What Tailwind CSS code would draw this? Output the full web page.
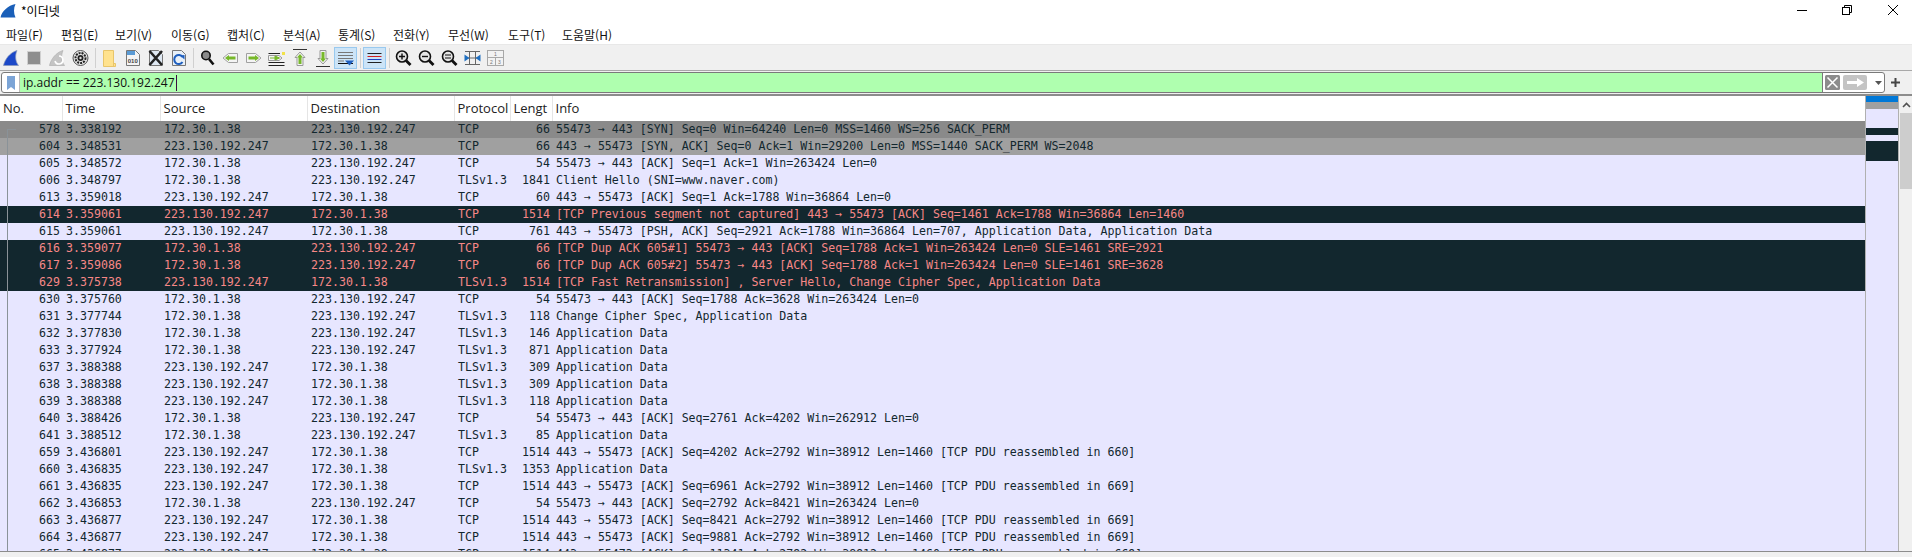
<!DOCTYPE html>
<html lang="ko">
<head>
<meta charset="UTF-8">
<title>*이더넷</title>
<script src="https://cdn.jsdelivr.net/npm/@tailwindcss/browser@4"></script>
</head>
<body class="m-0 bg-[#f0f0f0] font-['Open_Sans','Noto_Sans_CJK_KR',sans-serif] text-[12px] text-black">
<div class="w-[1912px] h-[557px] overflow-hidden flex flex-col">

  <!-- title bar -->
  <div class="h-[26px] bg-white flex items-center relative shrink-0">
    <svg class="ml-0 mt-[-6px]" width="18" height="18" viewBox="0 0 18 18"><path d="M0.5 16.5 C2 10 8 4.5 15.5 3 C13.5 7 13.5 12.5 15.5 16.5 Z" fill="#1a5fb8"/></svg>
    <span class="ml-[3px] mt-[-5px] font-['Noto_Sans_CJK_KR',sans-serif] text-[12px]">*이더넷</span>
    <div class="absolute right-0 top-0 flex">
      <svg class="mr-[35px] mt-[5px]" width="10" height="10" viewBox="0 0 10 10"><path d="M0 5.5H10" stroke="#000"/></svg>
      <svg class="mr-[36px] mt-[5px]" width="10" height="10" viewBox="0 0 10 10" fill="none" stroke="#000"><path d="M2.5 2.5V.5H9.5V7.5H7.5"/><rect x=".5" y="2.5" width="7" height="7"/></svg>
      <svg class="mr-[14px] mt-[5px]" width="10" height="10" viewBox="0 0 10 10"><path d="M0 0L10 10M10 0L0 10" stroke="#000"/></svg>
    </div>
  </div>

  <!-- menu -->
  <div class="h-[19px] bg-white border-b border-[#e8e8e8] flex pl-[6px] items-center font-['Noto_Sans_CJK_KR',sans-serif] text-[12px] leading-[18px] text-[#111] shrink-0">
    <span class="w-[55px]">파일(F)</span>
    <span class="w-[54px]">편집(E)</span>
    <span class="w-[56px]">보기(V)</span>
    <span class="w-[56px]">이동(G)</span>
    <span class="w-[56px]">캡처(C)</span>
    <span class="w-[55px]">분석(A)</span>
    <span class="w-[55px]">통계(S)</span>
    <span class="w-[55px]">전화(Y)</span>
    <span class="w-[60px]">무선(W)</span>
    <span class="w-[54px]">도구(T)</span>
    <span>도움말(H)</span>
  </div>

  <!-- main toolbar -->
  <div class="h-[26px] flex items-center pt-px border-b border-[#a8a8a8] shrink-0">
    <svg width="23" height="24" viewBox="0 0 23 24"><path d="M3.5 19.5 C5 13 10 6.5 17 4.5 C15 9 15 15 18.5 19.5 Z" fill="#1b48c8" stroke="#8a98b8" stroke-width=".7"/></svg>
    <svg width="23" height="24" viewBox="0 0 23 24"><rect x="4.5" y="5.5" width="13" height="13" fill="#8e8e8e" stroke="#d0d0d0"/></svg>
    <svg width="23" height="24" viewBox="0 0 23 24"><path d="M3.5 19.5 C5 13 10 6.5 17 4.5 C15 9 15 15 18.5 19.5 Z" fill="#c4c4c4" stroke="#b0b0b0" stroke-width=".7"/><path d="M13 10a4 4 0 1 1-4 5" fill="none" stroke="#fff" stroke-width="1.6"/></svg>
    <svg width="23" height="24" viewBox="0 0 23 24" fill="none"><circle cx="11.5" cy="12" r="7.5" fill="#e8e8e8" stroke="#555"/><circle cx="11.5" cy="12" r="5" stroke="#222" stroke-width="2" stroke-dasharray="2 1"/><circle cx="11.5" cy="12" r="3" fill="#222"/><circle cx="11.5" cy="12" r="1.2" fill="#ddd"/></svg>
    <div class="w-[6px] h-[20px] flex justify-center"><div class="w-px h-full bg-[#d0d0d0]"></div></div>

    <svg width="23" height="24" viewBox="0 0 23 24"><path d="M5.5 4.5H15.5V17.5H17.5V20.5H5.5Z" fill="#ffe28e" stroke="#e8c56a"/><path d="M15.5 14V20" stroke="#e8c56a"/></svg>
    <svg width="23" height="24" viewBox="0 0 23 24"><path d="M5.5 4.5H14.5L18.5 8.5V19.5H5.5Z" fill="#f4f4f4" stroke="#777"/><path d="M6 5H14V9H6Z" fill="#5b9bd5"/><text x="11.8" y="16.5" text-anchor="middle" font-size="6" font-family="Liberation Sans" font-weight="700" fill="#444">010</text></svg>
    <svg width="23" height="24" viewBox="0 0 23 24"><path d="M5.5 4.5H14.5L18.5 8.5V19.5H5.5Z" fill="#dfe8f2" stroke="#777"/><path d="M5.5 5L18 19M18 5L5.5 19" stroke="#222" stroke-width="2.6"/></svg>
    <svg width="23" height="24" viewBox="0 0 23 24" fill="none"><path d="M5.5 4.5H14.5L18.5 8.5V19.5H5.5Z" fill="#e8f0f8" stroke="#777"/><path d="M15.5 11a4.5 4.5 0 1 0 0 5" stroke="#1f5fbf" stroke-width="2"/><path d="M13 9.5L17.5 9V13.5Z" fill="#1f5fbf"/></svg>
    <div class="w-[6px] h-[20px] flex justify-center"><div class="w-px h-full bg-[#d0d0d0]"></div></div>

    <svg width="23" height="24" viewBox="0 0 23 24" fill="none"><circle cx="10" cy="9.5" r="4.2" fill="#8a8a8a" stroke="#111" stroke-width="1.6"/><path d="M13 13L17.5 18.5" stroke="#111" stroke-width="2.6"/></svg>
    <svg width="23" height="24" viewBox="0 0 23 24"><path d="M4 12L9.5 7.5H18.5V16.5H9.5Z" fill="#f4f4f4" stroke="#a0a0a0"/><path d="M6 12L10 9V10.5H16.5V13.5H10V15Z" fill="#77b82a"/></svg>
    <svg width="23" height="24" viewBox="0 0 23 24"><path d="M19 12L13.5 7.5H4.5V16.5H13.5Z" fill="#f4f4f4" stroke="#a0a0a0"/><path d="M17 12L13 9V10.5H6.5V13.5H13V15Z" fill="#77b82a"/></svg>
    <svg width="23" height="24" viewBox="0 0 23 24"><path d="M3.5 7.5H15M3.5 16.5H19.5M3.5 19.5H19.5" stroke="#222"/><path d="M3.5 9.5H14L17 12L14 14.5H3.5Z" fill="#f4f4f4" stroke="#999"/><path d="M5 12H10V10L14.5 12L10 14V12" fill="#77b82a" stroke="#77b82a"/><rect x="17" y="6" width="3" height="3" fill="#f2e24a"/></svg>
    <svg width="23" height="24" viewBox="0 0 23 24"><path d="M5 3.5H19" stroke="#333"/><path d="M12 6L17 11.5H15V19.5H9V11.5H7Z" fill="#f4f4f4" stroke="#999"/><path d="M12 8L15 11.5H13.5V18H10.5V11.5H9Z" fill="#77b82a"/></svg>
    <svg width="23" height="24" viewBox="0 0 23 24"><path d="M5 20.5H19" stroke="#333"/><path d="M12 18L17 12.5H15V4.5H9V12.5H7Z" fill="#f4f4f4" stroke="#999"/><path d="M12 16L15 12.5H13.5V6H10.5V12.5H9Z" fill="#77b82a"/></svg>
    <div class="w-[23px] h-[22px] bg-[#cce4f7] border border-[#99c9ef] flex items-center justify-center">
      <svg width="21" height="20" viewBox="0 0 21 20"><path d="M3 4.5H18M3 7.5H18M3 10.5H18" stroke="#777"/><path d="M3 15.5H18" stroke="#111"/><path d="M3 13H9" stroke="#777"/><path d="M10 12.5H19L14.5 17.5Z" fill="#1f5fbf"/></svg>
    </div>
    <div class="w-[6px] h-[20px] flex justify-center"><div class="w-px h-full bg-[#d0d0d0]"></div></div>
    <div class="w-[23px] h-[22px] bg-[#cce4f7] border border-[#99c9ef] flex items-center justify-center">
      <svg width="21" height="20" viewBox="0 0 21 20"><path d="M3.5 5.5H17.5" stroke="#222"/><path d="M3.5 8.5H17.5" stroke="#d02020"/><path d="M3.5 11.5H17.5" stroke="#2040c0"/><path d="M3.5 14.5H17.5" stroke="#222"/></svg>
    </div>
    <div class="w-[6px] h-[20px] flex justify-center"><div class="w-px h-full bg-[#d0d0d0]"></div></div>

    <svg width="23" height="24" viewBox="0 0 23 24" fill="none" stroke="#111"><circle cx="10" cy="10.5" r="5.5" fill="#e4e4e4" stroke-width="1.6"/><path d="M14 14.5L18.5 19" stroke-width="2.8"/><path d="M7 10.5H13M10 7.5V13.5" stroke-width="1.4"/></svg>
    <svg width="23" height="24" viewBox="0 0 23 24" fill="none" stroke="#111"><circle cx="10" cy="10.5" r="5.5" fill="#e4e4e4" stroke-width="1.6"/><path d="M14 14.5L18.5 19" stroke-width="2.8"/><path d="M7 10.5H13" stroke-width="1.4"/></svg>
    <svg width="23" height="24" viewBox="0 0 23 24" fill="none" stroke="#111"><circle cx="10" cy="10.5" r="5.5" fill="#e4e4e4" stroke-width="1.6"/><path d="M14 14.5L18.5 19" stroke-width="2.8"/><path d="M7 9H13M7 12H13" stroke-width="1.2"/></svg>
    <svg width="23" height="24" viewBox="0 0 23 24"><path d="M4 5.5H19M4 18.5H19M8.5 5V19M14.5 5V19M4 12H19" stroke="#666" fill="none"/><path d="M3.5 8.5L8.5 12L3.5 15.5Z" fill="#1f6fc0"/><path d="M19.5 8.5L14.5 12L19.5 15.5Z" fill="#1f6fc0"/></svg>
    <svg width="23" height="24" viewBox="0 0 23 24" fill="#f2f2f2" stroke="#a8a8a8"><rect x="3.5" y="4.5" width="16" height="15"/><path d="M3.5 11.5H19.5M11.5 11.5V19.5" fill="none"/><text x="11.5" y="10" text-anchor="middle" font-size="5" font-family="Liberation Sans" fill="#777" stroke="none">1</text><text x="7.5" y="17.5" text-anchor="middle" font-size="5" font-family="Liberation Sans" fill="#777" stroke="none">2</text><text x="15.5" y="17.5" text-anchor="middle" font-size="5" font-family="Liberation Sans" fill="#777" stroke="none">3</text></svg>
  </div>

  <!-- display filter -->
  <div class="h-[25px] flex items-center pl-px border-b-[2px] border-[#8c8c8c] shrink-0">
    <div class="w-[1884px] h-[21px] flex items-stretch border border-[#7a7a7a] rounded-[3px] bg-white overflow-hidden">
      <div class="w-[17px] flex items-center justify-center shrink-0">
        <svg width="8" height="14" viewBox="0 0 8 14"><path d="M0 0H8V14L4 11L0 14Z" fill="#7ba4d6"/></svg>
      </div>
      <div class="w-[1803px] bg-[#afffaf] border-l border-[#bcbcbc] flex items-center pl-[3px] text-[12px] text-[#111]">
        <span>ip.addr == 223.130.192.247</span><span class="w-px h-[16px] ml-px bg-[#3a1040]"></span>
      </div>
      <div class="flex-1 flex items-center border-l border-[#7a7a7a] pl-[2px]">
        <svg width="15" height="15" viewBox="0 0 15 15"><rect width="15" height="15" rx="1.5" fill="#8c8c8c"/><path d="M2.5 2.5L12.5 12.5M12.5 2.5L2.5 12.5" stroke="#fff" stroke-width="1.5"/></svg>
        <svg class="ml-[3px]" width="24" height="15" viewBox="0 0 24 15"><rect width="24" height="15" rx="2" fill="#c4c4c4"/><path d="M4 6H14V3L21 7.5L14 12V9H4Z" fill="#fff"/></svg>
        <svg class="ml-[8px]" width="7" height="4" viewBox="0 0 7 4"><path d="M0 0H7L3.5 4Z" fill="#555"/></svg>
      </div>
    </div>
    <svg class="ml-[6px]" width="9" height="9" viewBox="0 0 9 9"><path d="M4.5 0V9M0 4.5H9" stroke="#444" stroke-width="2"/></svg>
  </div>

  <!-- packet list -->
  <div class="h-[456px] flex border-b border-[#8c8c8c] bg-white shrink-0">
    <div class="w-[1866px] relative overflow-hidden shrink-0 border-r border-[#b0b0b0]">
      <table class="w-[1866px] table-fixed border-collapse whitespace-nowrap font-['DejaVu_Sans_Mono',monospace] text-[11.6px] text-[#12272e] [&_td]:h-[17px] [&_td]:p-0 [&_td]:pl-[4px] [&_td]:leading-[17px] [&_td]:overflow-hidden [&_th]:p-0 [&_th]:pl-[3px] [&_th]:font-normal [&_th]:text-left [&_th]:overflow-hidden [&_th]:font-['Open_Sans',sans-serif] [&_th]:text-[13px] [&_th]:text-[#222] [&_th]:border-r [&_th]:border-[#e5e5e5] [&_th]:h-[25px] [&_td:nth-child(1)]:text-right [&_td:nth-child(1)]:pr-[2px] [&_td:nth-child(6)]:text-right [&_td:nth-child(6)]:pr-[2px]">
        <colgroup>
          <col class="w-[62px]"><col class="w-[98px]"><col class="w-[147px]"><col class="w-[147px]"><col class="w-[56px]"><col class="w-[42px]"><col>
        </colgroup>
        <thead>
          <tr><th>No.</th><th>Time</th><th>Source</th><th>Destination</th><th>Protocol</th><th>Lengt</th><th>Info</th></tr>
        </thead>
        <tbody class="bg-[#e7e6ff]">
          <tr class="bg-[#8a8a8a]"><td>578</td><td>3.338192</td><td>172.30.1.38</td><td>223.130.192.247</td><td>TCP</td><td>66</td><td>55473 → 443 [SYN] Seq=0 Win=64240 Len=0 MSS=1460 WS=256 SACK_PERM</td></tr>
          <tr class="bg-[#a0a0a0]"><td>604</td><td>3.348531</td><td>223.130.192.247</td><td>172.30.1.38</td><td>TCP</td><td>66</td><td>443 → 55473 [SYN, ACK] Seq=0 Ack=1 Win=29200 Len=0 MSS=1440 SACK_PERM WS=2048</td></tr>
          <tr><td>605</td><td>3.348572</td><td>172.30.1.38</td><td>223.130.192.247</td><td>TCP</td><td>54</td><td>55473 → 443 [ACK] Seq=1 Ack=1 Win=263424 Len=0</td></tr>
          <tr><td>606</td><td>3.348797</td><td>172.30.1.38</td><td>223.130.192.247</td><td>TLSv1.3</td><td>1841</td><td>Client Hello (SNI=www.naver.com)</td></tr>
          <tr><td>613</td><td>3.359018</td><td>223.130.192.247</td><td>172.30.1.38</td><td>TCP</td><td>60</td><td>443 → 55473 [ACK] Seq=1 Ack=1788 Win=36864 Len=0</td></tr>
          <tr class="bg-[#12272e] text-[#f78787]"><td>614</td><td>3.359061</td><td>223.130.192.247</td><td>172.30.1.38</td><td>TCP</td><td>1514</td><td>[TCP Previous segment not captured] 443 → 55473 [ACK] Seq=1461 Ack=1788 Win=36864 Len=1460</td></tr>
          <tr><td>615</td><td>3.359061</td><td>223.130.192.247</td><td>172.30.1.38</td><td>TCP</td><td>761</td><td>443 → 55473 [PSH, ACK] Seq=2921 Ack=1788 Win=36864 Len=707, Application Data, Application Data</td></tr>
          <tr class="bg-[#12272e] text-[#f78787]"><td>616</td><td>3.359077</td><td>172.30.1.38</td><td>223.130.192.247</td><td>TCP</td><td>66</td><td>[TCP Dup ACK 605#1] 55473 → 443 [ACK] Seq=1788 Ack=1 Win=263424 Len=0 SLE=1461 SRE=2921</td></tr>
          <tr class="bg-[#12272e] text-[#f78787]"><td>617</td><td>3.359086</td><td>172.30.1.38</td><td>223.130.192.247</td><td>TCP</td><td>66</td><td>[TCP Dup ACK 605#2] 55473 → 443 [ACK] Seq=1788 Ack=1 Win=263424 Len=0 SLE=1461 SRE=3628</td></tr>
          <tr class="bg-[#12272e] text-[#f78787]"><td>629</td><td>3.375738</td><td>223.130.192.247</td><td>172.30.1.38</td><td>TLSv1.3</td><td>1514</td><td>[TCP Fast Retransmission] , Server Hello, Change Cipher Spec, Application Data</td></tr>
          <tr><td>630</td><td>3.375760</td><td>172.30.1.38</td><td>223.130.192.247</td><td>TCP</td><td>54</td><td>55473 → 443 [ACK] Seq=1788 Ack=3628 Win=263424 Len=0</td></tr>
          <tr><td>631</td><td>3.377744</td><td>172.30.1.38</td><td>223.130.192.247</td><td>TLSv1.3</td><td>118</td><td>Change Cipher Spec, Application Data</td></tr>
          <tr><td>632</td><td>3.377830</td><td>172.30.1.38</td><td>223.130.192.247</td><td>TLSv1.3</td><td>146</td><td>Application Data</td></tr>
          <tr><td>633</td><td>3.377924</td><td>172.30.1.38</td><td>223.130.192.247</td><td>TLSv1.3</td><td>871</td><td>Application Data</td></tr>
          <tr><td>637</td><td>3.388388</td><td>223.130.192.247</td><td>172.30.1.38</td><td>TLSv1.3</td><td>309</td><td>Application Data</td></tr>
          <tr><td>638</td><td>3.388388</td><td>223.130.192.247</td><td>172.30.1.38</td><td>TLSv1.3</td><td>309</td><td>Application Data</td></tr>
          <tr><td>639</td><td>3.388388</td><td>223.130.192.247</td><td>172.30.1.38</td><td>TLSv1.3</td><td>118</td><td>Application Data</td></tr>
          <tr><td>640</td><td>3.388426</td><td>172.30.1.38</td><td>223.130.192.247</td><td>TCP</td><td>54</td><td>55473 → 443 [ACK] Seq=2761 Ack=4202 Win=262912 Len=0</td></tr>
          <tr><td>641</td><td>3.388512</td><td>172.30.1.38</td><td>223.130.192.247</td><td>TLSv1.3</td><td>85</td><td>Application Data</td></tr>
          <tr><td>659</td><td>3.436801</td><td>223.130.192.247</td><td>172.30.1.38</td><td>TCP</td><td>1514</td><td>443 → 55473 [ACK] Seq=4202 Ack=2792 Win=38912 Len=1460 [TCP PDU reassembled in 660]</td></tr>
          <tr><td>660</td><td>3.436835</td><td>223.130.192.247</td><td>172.30.1.38</td><td>TLSv1.3</td><td>1353</td><td>Application Data</td></tr>
          <tr><td>661</td><td>3.436835</td><td>223.130.192.247</td><td>172.30.1.38</td><td>TCP</td><td>1514</td><td>443 → 55473 [ACK] Seq=6961 Ack=2792 Win=38912 Len=1460 [TCP PDU reassembled in 669]</td></tr>
          <tr><td>662</td><td>3.436853</td><td>172.30.1.38</td><td>223.130.192.247</td><td>TCP</td><td>54</td><td>55473 → 443 [ACK] Seq=2792 Ack=8421 Win=263424 Len=0</td></tr>
          <tr><td>663</td><td>3.436877</td><td>223.130.192.247</td><td>172.30.1.38</td><td>TCP</td><td>1514</td><td>443 → 55473 [ACK] Seq=8421 Ack=2792 Win=38912 Len=1460 [TCP PDU reassembled in 669]</td></tr>
          <tr><td>664</td><td>3.436877</td><td>223.130.192.247</td><td>172.30.1.38</td><td>TCP</td><td>1514</td><td>443 → 55473 [ACK] Seq=9881 Ack=2792 Win=38912 Len=1460 [TCP PDU reassembled in 669]</td></tr>
          <tr><td>665</td><td>3.436877</td><td>223.130.192.247</td><td>172.30.1.38</td><td>TCP</td><td>1514</td><td>443 → 55473 [ACK] Seq=11341 Ack=2792 Win=38912 Len=1460 [TCP PDU reassembled in 669]</td></tr>
        </tbody>
      </table>
      <!-- conversation line over the No. column -->
      <div class="absolute left-[7px] top-[33px] bottom-0 w-[9px] border-l border-t border-[#8a9298]"></div>
    </div>

    <!-- packet minimap -->
    <div class="w-[33px] flex flex-col bg-[#e7e6ff] border-r border-[#b0b0b0] shrink-0">
      <div class="h-[6px] bg-[#0078d7]"></div>
      <div class="h-[7px] bg-[#a0a0a0]"></div>
      <div class="h-[19px]"></div>
      <div class="h-[7px] bg-[#12272e]"></div>
      <div class="h-[6px]"></div>
      <div class="h-[20px] bg-[#12272e]"></div>
    </div>

    <!-- scrollbar -->
    <div class="flex-1 flex flex-col bg-[#f0f0f0] pl-px">
      <div class="h-[17px] flex items-center justify-center">
        <svg width="9" height="6" viewBox="0 0 9 6" fill="none"><path d="M1 5L4.5 1.5L8 5" stroke="#505050" stroke-width="1.6"/></svg>
      </div>
      <div class="h-[76px] bg-[#cdcdcd]"></div>
    </div>
  </div>
</div>
</body>
</html>
